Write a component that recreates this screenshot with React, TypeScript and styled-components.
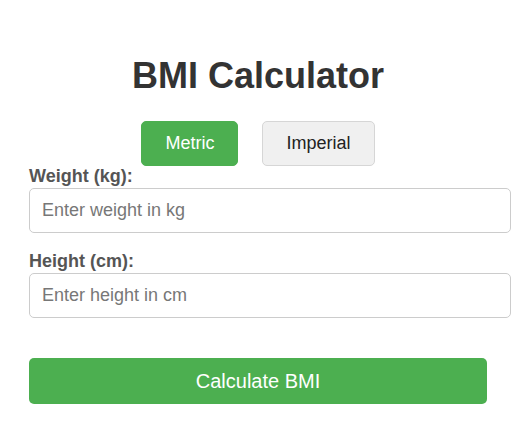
import React, { useState } from 'react'
import styled, { createGlobalStyle } from 'styled-components'

const GlobalStyle = createGlobalStyle`
  body {
    margin: 0;
    background: #fff;
    font-family: 'Liberation Sans', Arial, sans-serif;
  }
`

const Page = styled.div`
  width: 458px;
  padding: 55px 29px 0;
`

const Title = styled.h1`
  margin: 0;
  text-align: center;
  font-size: 36px;
  line-height: 41px;
  font-weight: bold;
  color: #333;
`

const UnitToggle = styled.div`
  display: flex;
  justify-content: center;
  gap: 24px;
  margin-top: 25px;
`

const UnitButton = styled.button<{ $active?: boolean }>`
  box-sizing: border-box;
  height: 45px;
  padding: 0 23px;
  font-family: inherit;
  font-size: 18px;
  border-radius: 5px;
  border: 1px solid ${({ $active }) => ($active ? '#4caf50' : '#d6d6d6')};
  background: ${({ $active }) => ($active ? '#4caf50' : '#f0f0f0')};
  color: ${({ $active }) => ($active ? '#fff' : '#222')};
  cursor: pointer;
`

const Field = styled.div<{ $gap?: number }>`
  margin-top: ${({ $gap }) => $gap ?? 0}px;
`

const Label = styled.label`
  display: block;
  font-size: 18px;
  line-height: 21px;
  font-weight: bold;
  color: #555;
  margin-bottom: 1px;
`

const Input = styled.input`
  box-sizing: border-box;
  display: block;
  width: 482px;
  height: 45px;
  padding: 0 12px;
  font-family: inherit;
  font-size: 18px;
  color: #333;
  border: 1px solid #ccc;
  border-radius: 5px;
  outline: none;

  &::placeholder {
    color: #777;
  }
`

const CalcButton = styled.button`
  display: block;
  box-sizing: border-box;
  width: 458px;
  height: 46px;
  margin-top: 40px;
  font-family: inherit;
  font-size: 20px;
  color: #fff;
  background: #4caf50;
  border: none;
  border-radius: 5px;
  cursor: pointer;
`

export default function App() {
  const [unit, setUnit] = useState<'metric' | 'imperial'>('metric')
  const metric = unit === 'metric'

  return (
    <>
      <GlobalStyle />
      <Page>
        <Title>BMI Calculator</Title>
        <UnitToggle>
          <UnitButton $active={metric} onClick={() => setUnit('metric')}>
            Metric
          </UnitButton>
          <UnitButton $active={!metric} onClick={() => setUnit('imperial')}>
            Imperial
          </UnitButton>
        </UnitToggle>
        <Field>
          <Label>{metric ? 'Weight (kg):' : 'Weight (lbs):'}</Label>
          <Input placeholder={metric ? 'Enter weight in kg' : 'Enter weight in lbs'} />
        </Field>
        <Field $gap={18}>
          <Label>{metric ? 'Height (cm):' : 'Height (in):'}</Label>
          <Input placeholder={metric ? 'Enter height in cm' : 'Enter height in inches'} />
        </Field>
        <CalcButton>Calculate BMI</CalcButton>
      </Page>
    </>
  )
}
